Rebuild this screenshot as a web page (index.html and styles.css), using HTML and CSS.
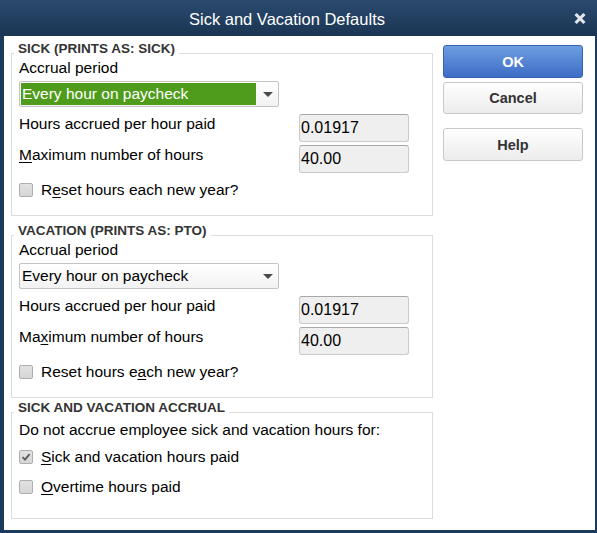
FILE: index.html
```html
<!DOCTYPE html>
<html>
<head>
<meta charset="utf-8">
<title>Sick and Vacation Defaults</title>
<link rel="stylesheet" href="styles.css">
</head>
<body>
<div class="window">
  <div class="titlebar">
    <div class="title">Sick and Vacation Defaults</div>
    <div class="close"><svg width="12" height="13" viewBox="0 0 12 13"><path d="M1.6 2 L10.4 11 M10.4 2 L1.6 11" stroke="#e2e6ea" stroke-width="3.2"/></svg></div>
  </div>
  <div class="content">
    <div class="main">
      <div class="group">
        <div class="legend-row"><span class="legend">SICK (PRINTS AS: SICK)</span></div>
        <div class="box">
          <div class="label top">Accrual period</div>
          <div class="select selected"><span class="select-value">Every hour on paycheck</span><span class="arrow"></span></div>
          <div class="row first"><span class="label">Hours accrued per hour paid</span><span class="input">0.01917</span></div>
          <div class="row second"><span class="label"><u>M</u>aximum number of hours</span><span class="input">40.00</span></div>
          <div class="check-row last"><span class="checkbox"></span><span class="label">R<u>e</u>set hours each new year?</span></div>
        </div>
      </div>
      <div class="group vacation">
        <div class="legend-row"><span class="legend">VACATION (PRINTS AS: PTO)</span></div>
        <div class="box">
          <div class="label top">Accrual period</div>
          <div class="select"><span class="select-value">Every hour on paycheck</span><span class="arrow"></span></div>
          <div class="row first"><span class="label">Hours accrued per hour paid</span><span class="input">0.01917</span></div>
          <div class="row second"><span class="label">Ma<u>x</u>imum number of hours</span><span class="input">40.00</span></div>
          <div class="check-row last"><span class="checkbox"></span><span class="label">Reset hours e<u>a</u>ch new year?</span></div>
        </div>
      </div>
      <div class="group accrual">
        <div class="legend-row"><span class="legend">SICK AND VACATION ACCRUAL</span></div>
        <div class="box box-accrual">
          <div class="label intro">Do not accrue employee sick and vacation hours for:</div>
          <div class="check-row opt1"><span class="checkbox checked"><svg width="12" height="12" viewBox="0 0 12 12"><path d="M2.5 6.2 L5 8.7 L9.6 3.2" fill="none" stroke="#5a5a5a" stroke-width="1.8"/></svg></span><span class="label"><u>S</u>ick and vacation hours paid</span></div>
          <div class="check-row opt2"><span class="checkbox"></span><span class="label"><u>O</u>vertime hours paid</span></div>
        </div>
      </div>
    </div>
    <div class="side">
      <div class="btn primary">OK</div>
      <div class="btn cancel">Cancel</div>
      <div class="btn help">Help</div>
    </div>
  </div>
</div>
</body>
</html>
```

FILE: styles.css
```css
* { box-sizing: border-box; }
html, body { margin: 0; padding: 0; }
body {
  font-family: "Liberation Sans", Arial, sans-serif;
  background: #1c3a5b;
}
.window {
  width: 597px;
  height: 533px;
  display: flex;
  flex-direction: column;
  background: #1c3a5b;
}
.titlebar {
  height: 36px;
  flex: none;
  display: flex;
  align-items: center;
  background: linear-gradient(#2a4a6e, #1b3553);
}
.title {
  flex: 1;
  text-align: center;
  color: #ffffff;
  font-size: 16.5px;
  line-height: 20px;
  padding-top: 2px;
}
.close {
  width: 12px;
  height: 13px;
  margin: 1px 11px 0 0;
  display: flex;
}
.content {
  flex: 1;
  margin: 0 2px 3px 4px;
  background: #ffffff;
  display: flex;
  gap: 10px;
  padding: 6px 12px 0 7px;
}
.main {
  width: 422px;
  flex: none;
}
.group.vacation { margin-top: 8px; }
.group.accrual { margin-top: 3px; }
.legend-row {
  height: 14px;
  line-height: 14px;
  font-size: 13.5px;
  font-weight: bold;
  color: #333333;
  margin-bottom: -3px;
}
.legend {
  display: inline-block;
  background: #ffffff;
  padding: 0 4px;
  margin-left: 3px;
}
.box {
  border: 1px solid #dcdcdc;
  padding: 5px 23px 15px 7px;
}
.label {
  font-size: 15.5px;
  line-height: 18px;
  color: #000000;
}
.label u { text-decoration: underline; text-underline-offset: 2px; }
.select {
  margin-top: 4px;
  width: 260px;
  height: 26px;
  border: 1px solid #c4c4c4;
  border-radius: 2px;
  background: linear-gradient(#ffffff, #f2f2f2);
  display: flex;
  align-items: center;
  padding: 1px;
}
.select-value {
  width: 235px;
  height: 22px;
  line-height: 22px;
  font-size: 15.5px;
  padding-left: 1px;
  color: #000000;
}
.selected .select-value {
  background: #4f9c1d;
  color: #ffffff;
}
.arrow {
  width: 0;
  height: 0;
  margin-left: 7px;
  border-left: 5px solid transparent;
  border-right: 5px solid transparent;
  border-top: 5px solid #4a4a4a;
}
.row {
  display: flex;
  align-items: flex-start;
}
.row .label {
  flex: 1;
  margin-top: 1px;
}
.row.first { margin-top: 7px; }
.row.second { margin-top: 3px; }
.input {
  width: 110px;
  height: 28px;
  border: 1px solid #cacaca;
  border-top-color: #a8a8a8;
  border-radius: 3px;
  background: #efefef;
  font-size: 16px;
  line-height: 26px;
  padding-left: 1px;
  color: #000000;
}
.check-row {
  height: 20px;
  display: flex;
  align-items: center;
  gap: 8px;
}
.check-row.last { margin-top: 7px; }
.checkbox {
  width: 14px;
  height: 14px;
  flex: none;
  border: 1px solid #aeaeae;
  border-radius: 2px;
  background: linear-gradient(#e2e2e2, #d6d6d6);
  display: flex;
  align-items: center;
  justify-content: center;
}
.box-accrual {
  padding: 8px 23px 21px 7px;
}
.check-row.opt1 { margin-top: 8px; }
.check-row.opt2 { margin-top: 10px; }
.side {
  width: 140px;
  flex: none;
  padding-top: 3px;
  display: flex;
  flex-direction: column;
}
.btn {
  height: 32px;
  border: 1px solid #c8c8c8;
  border-radius: 3px;
  background: linear-gradient(#ffffff, #ececec);
  color: #333333;
  font-size: 14.5px;
  font-weight: bold;
  display: flex;
  align-items: center;
  justify-content: center;
}
.btn.primary {
  height: 33px;
  background: linear-gradient(#6c9ee2, #3d6cc5);
  border-color: #3461b0;
  color: #ffffff;
}
.btn.cancel { margin-top: 4px; }
.btn.help { margin-top: 14px; height: 33px; }
```
